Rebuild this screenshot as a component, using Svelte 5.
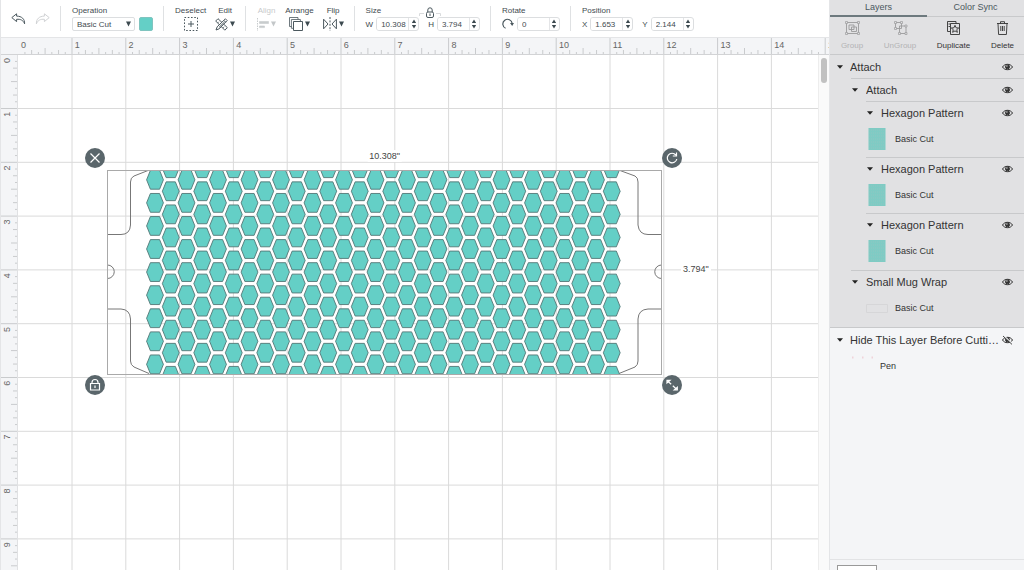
<script lang="ts">
  const unit = 53.8; // screen pixels per inch

  let boardWidth: number = $state(1024);
  let boardHeight: number = $state(570);

  let columns = $derived(Math.ceil(boardWidth / unit));
  let rows = $derived(Math.ceil(boardHeight / unit));

  let operation: string = $state('Basic Cut');
  let width: string = $state('10.308');
  let height: string = $state('3.794');
  let rotation: string = $state('0');
  let posX: string = $state('1.653');
  let posY: string = $state('2.144');
  let activeTab: string = $state('Layers');

  const actions = [
    { name: 'Group', icon: 'group', disabled: true },
    { name: 'UnGroup', icon: 'ungroup', disabled: true },
    { name: 'Duplicate', icon: 'duplicate', disabled: false },
    { name: 'Delete', icon: 'trash', disabled: false }
  ];

  let layers = $state([
    { name: 'Attach', level: 0, visible: true, selected: true },
    { name: 'Attach', level: 1, visible: true, selected: true },
    { name: 'Hexagon Pattern', level: 2, visible: true, selected: true, item: 'Basic Cut', thumb: 'hex' },
    { name: 'Hexagon Pattern', level: 2, visible: true, selected: true, item: 'Basic Cut', thumb: 'hex' },
    { name: 'Hexagon Pattern', level: 2, visible: true, selected: true, item: 'Basic Cut', thumb: 'hex' },
    { name: 'Small Mug Wrap', level: 1, visible: true, selected: true, item: 'Basic Cut', thumb: 'wrap' },
    { name: 'Hide This Layer Before Cutti…', level: 0, visible: false, selected: false, item: 'Pen', thumb: 'pen' }
  ]);

  // Hexagon centres, odd columns are shifted up by half a row
  const hexagons: { x: number; y: number }[] = [];
  for (let col = 0; col < 30; col++) {
    const count = col % 2 ? 10 : 9;
    for (let row = 0; row < count; row++) {
      hexagons.push({ x: 48 + col * 15.75, y: (col % 2 ? -1.8 : 9.8) + row * 23.07 });
    }
  }

  function range(count: number): number[] {
    return Array.from({ length: count }, (_, i) => i);
  }

  function tickLength(i: number): number {
    if (i === 0) return 0;
    if (i % 8 === 0) return 17;
    if (i % 4 === 0) return 7;
    return i % 2 === 0 ? 5 : 3;
  }
</script>

{#snippet arrow()}
  <svg class="arrow" width="5" height="6" viewBox="0 0 5 6"><path d="M0 0.5h5L2.5 5.5z" fill="#3d4a50" /></svg>
{/snippet}

{#snippet stepper()}
  <button class="stepper" aria-label="Step value">
    <svg width="6" height="10" viewBox="0 0 6 10"><path d="M0.8 4L3 0.5 5.2 4zM0.8 6L3 9.5 5.2 6z" fill="#3d4a50" /></svg>
  </button>
{/snippet}

{#snippet eye(open: boolean)}
  <svg width="11" height="10" viewBox="0 0 11 10" fill="none" stroke="#333">
    <path d="M0.5 5C2.5 1.4 8.5 1.4 10.5 5C8.5 8.6 2.5 8.6 0.5 5z" />
    <circle cx="5.5" cy="4.8" r="2" fill="#333" />
    <circle cx="4.9" cy="4" r="0.7" fill="#ddd" stroke="none" />
    {#if !open}
      <path d="M1.8 0.8L10.4 8.8" stroke="#f4f5f7" stroke-width="1.2" />
      <path d="M1 1L10 9.4" stroke-width="0.9" />
    {/if}
  </svg>
{/snippet}

<div class="app">
  <main>
    <header class="toolbar">
      <div class="history">
        <button aria-label="Undo">
          <svg width="15" height="12" viewBox="0 0 15 12" fill="none" stroke="#4b585e"><path d="M5.6 0.8L0.8 4.6L5.6 8.6V6.3C9.5 6 12 7 13.6 10.8C13.8 6 10.8 3.2 5.6 3.1z" stroke-linejoin="round" /></svg>
        </button>
        <button aria-label="Redo">
          <svg width="15" height="12" viewBox="0 0 15 12" fill="none" stroke="#d0d2d4"><path d="M9.4 0.8L14.2 4.6L9.4 8.6V6.3C5.5 6 3 7 1.4 10.8C1.2 6 4.2 3.2 9.4 3.1z" stroke-linejoin="round" /></svg>
        </button>
      </div>

      <div class="group">
        <label class="title" for="operation">Operation</label>
        <div class="row">
          <span class="select">
            <select id="operation" bind:value={operation}>
              <option>Basic Cut</option>
              <option>Pen</option>
            </select>
            {@render arrow()}
          </span>
          <button class="swatch" aria-label="Colour"></button>
        </div>
      </div>

      <div class="group tools">
        <button class="tool">
          <span class="title">Deselect</span>
          <span class="row">
            <svg width="14" height="14" viewBox="0 0 14 14" fill="none" stroke="#4b585e">
              <path d="M0.5 0.5h13v13h-13z" stroke-dasharray="1.6 1.65" /><path d="M7 4v6M4 7h6" />
            </svg>
          </span>
        </button>
        <button class="tool">
          <span class="title">Edit</span>
          <span class="row">
            <svg width="13" height="13" viewBox="0 0 13 13" fill="none" stroke="#4b585e">
              <path d="M3 0.7L12.3 9.6L9.8 12.2L0.7 3z" />
              <path d="M10.4 0.8L12.2 2.6L4.2 10.8L1 12L2.2 8.8z" fill="#fff" />
              <path d="M3.8 3.8l-1 1M5.6 5.4l-1 1M9 8.8l-1 1M9 2.4l1.7 1.8M9.5 4L4 9.4" />
            </svg>
            {@render arrow()}
          </span>
        </button>
      </div>

      <div class="group tools">
        <button class="tool" disabled>
          <span class="title">Align</span>
          <span class="row">
            <svg width="12" height="13" viewBox="0 0 12 13" fill="none" stroke="#4b585e">
              <path d="M0.5 0v13" stroke-dasharray="1.5 1" /><path d="M2.5 3.5h9v2h-9zM2.5 8h5v1.6h-5z" fill="#4b585e" stroke-width="0.6" />
            </svg>
            {@render arrow()}
          </span>
        </button>
        <button class="tool">
          <span class="title">Arrange</span>
          <span class="row">
            <svg width="14" height="14" viewBox="0 0 14 14" fill="none" stroke="#4b585e">
              <path d="M2.5 9.5h-2v-9h8.5v2" stroke-width="0.8" /><path d="M4 11.3h-1.6v-8.8h9v1.8" stroke-width="0.8" /><path d="M4.5 4.5h9v9h-9z" fill="#fff" />
            </svg>
            {@render arrow()}
          </span>
        </button>
        <button class="tool">
          <span class="title">Flip</span>
          <span class="row">
            <svg width="14" height="14" viewBox="0 0 14 14" fill="none" stroke="#4b585e">
              <path d="M0.6 2.2L5 7L0.6 11.8zM13.4 2.2L9 7l4.4 4.8z" /><path d="M7 0v14" stroke-dasharray="2 1.4" />
            </svg>
            {@render arrow()}
          </span>
        </button>
      </div>

      <div class="group">
        <span class="title">Size</span>
        <div class="row fields">
          <label for="width">W</label>
          <span class="field"><input id="width" bind:value={width} />{@render stepper()}</span>
          <label class="next" for="height">H</label>
          <span class="field"><input id="height" bind:value={height} />{@render stepper()}</span>
        </div>
        <button class="ratio" aria-label="Lock proportions">
          <svg width="22" height="12" viewBox="0 0 22 12" fill="none" stroke="#4b585e">
            <path d="M0.5 9V6.5H5M17 6.5h4.5V9" stroke="#d9dbdd" />
            <path d="M8.8 5V3a2.2 2.2 0 0 1 4.4 0v2" /><rect x="7.5" y="5" width="7" height="5.5" rx="1.5" /><path d="M11 6.5v2.5" />
          </svg>
        </button>
      </div>

      <div class="group">
        <label class="title" for="rotate">Rotate</label>
        <div class="row fields">
          <svg width="12" height="12" viewBox="0 0 12 12" fill="none" stroke="#4b585e">
            <path d="M3.6 10.3A4.7 4.7 0 1 1 10.2 5.5" stroke-width="1.2" /><path d="M8 5h4L10.2 8z" fill="#4b585e" stroke="none" />
          </svg>
          <span class="field"><input id="rotate" bind:value={rotation} />{@render stepper()}</span>
        </div>
      </div>

      <div class="group">
        <span class="title">Position</span>
        <div class="row fields">
          <label for="pos-x">X</label>
          <span class="field"><input id="pos-x" bind:value={posX} />{@render stepper()}</span>
          <label class="next" for="pos-y">Y</label>
          <span class="field"><input id="pos-y" bind:value={posY} />{@render stepper()}</span>
        </div>
      </div>
    </header>

    <div class="board" bind:clientWidth={boardWidth} bind:clientHeight={boardHeight}>
      <svg class="ruler top">
        {#each range(columns * 8) as i}
          <line x1={17.2 + (i * unit) / 8} x2={17.2 + (i * unit) / 8} y1={17 - tickLength(i)} y2="17" />
        {/each}
        {#each range(columns) as n}
          <text x={20 + n * unit} y="10">{n}</text>
        {/each}
      </svg>
      <svg class="ruler side">
        {#each range(rows * 8) as i}
          <line y1={(i * unit) / 8 - 0.3} y2={(i * unit) / 8 - 0.3} x1={17 - tickLength(i)} x2="17" />
        {/each}
        {#each range(rows) as n}
          <text transform="translate(9 {8 + n * unit}) rotate(-90)">{n}</text>
        {/each}
      </svg>

      <div class="canvas">
        <svg class="grid">
          {#each range(columns) as n}
            <line x1={(n + 1) * unit + 0.2} x2={(n + 1) * unit + 0.2} y1="0" y2="100%" />
          {/each}
          {#each range(rows) as n}
            <line x1="0" x2="100%" y1={(n + 1) * unit - 0.3} y2={(n + 1) * unit - 0.3} />
          {/each}
        </svg>

        <div class="selection">
          <svg width="555" height="205" viewBox="0 0 555 205">
            <g class="wrap">
              <path d="M41 0.5L27 6Q23.5 7.5 23.5 12V55Q23 64.5 14 64.5H0.5M0.5 95A6.7 6.7 0 0 1 0.5 108.5M0.5 139H14Q23 139.5 23.5 149V191Q23.5 195 27 197L42 203.5" />
              <path d="M513 0.5L528 6Q531 7.5 531 12V55Q532 64.5 541 64.5H554.5M554.5 95A6.7 6.7 0 0 0 554.5 108.5M554.5 139H541Q531.5 139.5 531 149V191Q531 195 528 197L512 203.5" />
            </g>
            <g class="hexes">
              {#each hexagons as h}
                <path d="M{h.x - 8.4} {h.y}l3.8 -9.4h9.2l3.8 9.4l-3.8 9.4h-9.2z" />
              {/each}
            </g>
            <rect class="bounds" x="0.5" y="0.5" width="554" height="204" />
          </svg>
          <span class="size width">10.308"</span>
          <span class="size height">3.794"</span>
          <button class="handle remove" aria-label="Delete selection">
            <svg width="20" height="20" viewBox="0 0 20 20"><path d="M5.5 5.5l9 9M14.5 5.5l-9 9" /></svg>
          </button>
          <button class="handle rotate" aria-label="Rotate selection">
            <svg width="20" height="20" viewBox="0 0 20 20"><path d="M13.8 7A4.8 4.8 0 1 0 14.8 11M14.5 4.5v3.5h-3.7" /></svg>
          </button>
          <button class="handle lock" aria-label="Lock selection">
            <svg width="20" height="20" viewBox="0 0 20 20"><path d="M7 8.5V7.5a3 3 0 0 1 6 0v1M5.5 8.5h9v6.5h-9zM10 10.5v2.5" /></svg>
          </button>
          <button class="handle resize" aria-label="Resize selection">
            <svg width="20" height="20" viewBox="0 0 20 20"><path d="M5.5 6L9.2 9.2M10.8 10.8l4 3.7" /><path d="M5 8V5.4h3zM15.3 12.4V15h-3z" /></svg>
          </button>
        </div>
      </div>
      <div class="scrollbar"><div class="thumb"></div></div>
    </div>
  </main>

  <aside>
    <nav class="tabs">
      {#each ['Layers', 'Color Sync'] as tab}
        <button class:active={activeTab === tab} onclick={() => (activeTab = tab)}>{tab}</button>
      {/each}
    </nav>

    <div class="actions">
      {#each actions as action}
        <button disabled={action.disabled}>
          <svg width="15" height="14" viewBox="0 0 15 14" fill="none" stroke="#333" stroke-width="0.9">
            {#if action.icon === 'group'}
              <path d="M1.5 1.5h12v11h-12z" /><path d="M0.5 0.5h2v2h-2zM12.5 0.5h2v2h-2zM0.5 11.5h2v2h-2zM12.5 11.5h2v2h-2z" fill="#e1e1e3" stroke-width="0.7" /><path d="M4 4h5v4.5H4zM6.5 6h5v4.5h-5z" />
            {:else if action.icon === 'ungroup'}
              <path d="M2.5 1.5h6v6h-6zM6.5 5h6.5v7.5H6.5z" /><path d="M1.5 0.5h2v2h-2zM7.5 0.5h2v2h-2zM1.5 6.5h2v2h-2zM5.5 11.5h2v2h-2zM12 11.5h2v2h-2zM12 4h2v2h-2z" fill="#e1e1e3" stroke-width="0.7" />
            {:else if action.icon === 'duplicate'}
              <path d="M4 10.5H1.5v-10H10v2M2.5 3h2M2.5 5.5h1.5" /><path d="M4.5 2.5h9v11h-9z" /><path d="M9 4.3l1.1 2.5 2.6 0.2-2 1.7 0.7 2.6L9 9.9 6.6 11.3l0.7-2.6-2-1.7 2.6-0.2z" />
            {:else}
              <path d="M2 2.5h11M5.5 2.5V0.7h4v1.8M3 2.5l0.6 11h7.8l0.6-11M5.8 5v5M7.5 5v5M9.2 5v5" />
            {/if}
          </svg>
          {action.name}
        </button>
      {/each}
    </div>

    <ul class="layers">
      {#each layers as layer}
        <li class="level-{layer.level}" class:selected={layer.selected}>
          <div class="inner">
            <div class="head">
              <svg class="caret" width="6" height="4" viewBox="0 0 6 4"><path d="M0 0.3h6L3 3.7z" fill="#222" /></svg>
              <span class="name">{layer.name}</span>
              <button class="eye" aria-label="Toggle visibility" onclick={() => (layer.visible = !layer.visible)}>
                {@render eye(layer.visible)}
              </button>
            </div>
            {#if layer.item}
              <div class="item">
                <svg width="22" height="22" viewBox="0 0 22 22">
                  {#if layer.thumb === 'hex'}
                    <rect x="2.5" width="17" height="22" fill="#7fcbc4" />
                    {#each [2, 5, 8, 11, 14, 17, 20] as y}
                      <path d="M3 {y}h16" stroke="#9ac8c5" stroke-width="0.6" stroke-dasharray="1 1" />
                    {/each}
                  {:else if layer.thumb === 'wrap'}
                    <path d="M0.5 7.5h21v8h-21z" fill="none" stroke="#d6d6d8" />
                  {:else}
                    <path d="M1 2.5h1.5M11 2.5h1.5M20.5 2.5h1.5" stroke="#efd3da" stroke-width="2" />
                  {/if}
                </svg>
                <span>{layer.item}</span>
              </div>
            {/if}
          </div>
        </li>
      {/each}
    </ul>

    <footer><button aria-label="Canvas colour"></button></footer>
  </aside>
</div>

<style>
  :global(body) {
    margin: 0;
    overflow: hidden;
  }

  .app {
    display: flex;
    height: 100vh;
    font-family: "Liberation Sans", Arial, sans-serif;
    font-size: 8px;
    color: #3f4b50;
    background: #fff;
  }

  button {
    margin: 0;
    padding: 0;
    border: 0;
    background: none;
    font: inherit;
    color: inherit;
    cursor: pointer;
  }

  svg {
    display: block;
    flex: none;
  }

  main {
    flex: 1;
    min-width: 0;
    display: flex;
    flex-direction: column;
    border-left: 1px solid #e4e5e7;
    box-sizing: border-box;
  }

  /* Toolbar */
  .toolbar {
    display: flex;
    align-items: center;
    height: 37px;
    border-bottom: 1px solid #e4e5e7;
  }

  .history {
    display: flex;
    gap: 9px;
    padding: 0 10px;
  }

  .group {
    position: relative;
    height: 25px;
    padding: 0 10px 0 11px;
    border-left: 1px solid #dfe1e3;
  }

  .title {
    display: block;
    height: 11px;
    line-height: 9px;
  }

  .row {
    display: flex;
    align-items: center;
    height: 14px;
    gap: 4px;
  }

  .tools {
    display: flex;
    gap: 9px;
  }

  .tool {
    display: flex;
    flex-direction: column;
    align-items: center;
  }

  .tool .row {
    gap: 2px;
  }

  .tool:disabled {
    opacity: 0.3;
  }

  .select {
    position: relative;
    display: flex;
  }

  .select .arrow {
    position: absolute;
    right: 4px;
    top: 4px;
    pointer-events: none;
  }

  select {
    appearance: none;
    width: 63px;
    height: 14px;
    padding: 0 4px;
    border: 1px solid #dcdee0;
    border-radius: 2px;
    background: #fff;
    font: inherit;
    color: inherit;
  }

  .swatch {
    width: 14px;
    height: 14px;
    border: 1px solid #7fc4bf;
    border-radius: 2px;
    background: #64cfc6;
  }

  .fields {
    gap: 3px;
  }

  .next {
    margin-left: 6px;
  }

  .field {
    display: flex;
    box-sizing: border-box;
    width: 43px;
    height: 14px;
    border: 1px solid #dcdee0;
    border-radius: 3px;
    overflow: hidden;
  }

  .field input {
    flex: 1;
    min-width: 0;
    padding: 0 0 0 4px;
    border: 0;
    outline: 0;
    background: #fff;
    font: inherit;
    color: inherit;
  }

  .stepper {
    display: grid;
    place-items: center;
    width: 10px;
    border-left: 1px solid #e4e5e7;
  }

  .ratio {
    position: absolute;
    left: 64px;
    top: 1px;
  }

  /* Rulers and canvas */
  .board {
    flex: 1;
    min-height: 0;
    display: grid;
    grid-template-columns: 17px 1fr 11px;
    grid-template-rows: 17px 1fr;
  }

  .ruler {
    width: 100%;
    height: 100%;
    min-width: 0;
    min-height: 0;
    background: #f4f5f7;
  }

  .ruler line {
    stroke: #c9cbcd;
  }

  .ruler text {
    font-size: 9px;
    fill: #666;
  }

  .top {
    grid-column: 1 / -1;
    border-bottom: 1px solid #d2d3d5;
    box-sizing: border-box;
  }

  .side {
    border-right: 1px solid #e0e1e3;
    box-sizing: border-box;
  }

  .canvas {
    position: relative;
    overflow: hidden;
    min-width: 0;
  }

  .grid {
    width: 100%;
    height: 100%;
  }

  .grid line {
    stroke: #dadada;
  }

  .selection {
    position: absolute;
    left: 89px;
    top: 115px;
  }

  .wrap path {
    fill: none;
    stroke: #777;
  }

  .hexes path {
    fill: #64cfc6;
    stroke: #547776;
    stroke-width: 0.9;
  }

  .bounds {
    fill: none;
    stroke: #a9a9a9;
  }

  .size {
    position: absolute;
    padding: 0 2px;
    background: #fff;
    font-size: 9px;
    line-height: 12px;
    color: #444;
  }

  .size.width {
    left: 50%;
    top: -20px;
    transform: translateX(-50%);
  }

  .size.height {
    left: 574px;
    top: 93px;
  }

  .handle {
    position: absolute;
    width: 20px;
    height: 20px;
    border-radius: 50%;
    background: #5a666b;
  }

  .handle path {
    fill: none;
    stroke: #fff;
    stroke-width: 1.2;
  }

  .remove {
    left: -22px;
    top: -22px;
  }

  .rotate {
    right: -20px;
    top: -22px;
  }

  .lock {
    left: -22px;
    bottom: -20px;
  }

  .resize {
    right: -20px;
    bottom: -20px;
  }

  .scrollbar {
    padding: 3px 2px;
    background: #fafafa;
    border-left: 1px solid #ededed;
  }

  .thumb {
    width: 6px;
    height: 25px;
    border-radius: 3px;
    background: #c1c1c1;
  }

  /* Layers panel */
  aside {
    display: flex;
    flex-direction: column;
    width: 195px;
    background: #f4f5f7;
    box-sizing: border-box;
    border-left: 1px solid #e4e5e7;
    color: #333;
  }

  .tabs {
    display: grid;
    grid-template-columns: 1fr 1fr;
    background: #e1e1e3;
    font-size: 9px;
  }

  .tabs button {
    height: 17px;
    padding-bottom: 2px;
    border-bottom: 1px solid #c8c9cb;
    color: #4b585e;
  }

  .tabs .active {
    border-bottom: 2px solid #6d797e;
    padding-bottom: 1px;
  }

  .actions {
    display: grid;
    grid-template-columns: 44px 52px 55px 43px;
    height: 37px;
    border-bottom: 1px solid #c8c9cb;
    background: #e1e1e3;
  }

  .actions button {
    display: flex;
    flex-direction: column;
    align-items: center;
    gap: 6px;
    padding-top: 4px;
  }

  .actions button:disabled {
    color: #b3b3b5;
  }

  .actions button:disabled svg {
    opacity: 0.4;
  }

  .layers {
    flex: 1;
    min-height: 0;
    margin: 0;
    padding: 0;
    list-style: none;
  }

  .selected {
    background: #e1e1e3;
  }

  .inner {
    border-top: 1px solid #c8c9cb;
  }

  .level-0:first-child .inner {
    border-top: 0;
  }

  .level-1 .inner {
    margin-left: 21px;
  }

  .level-2 .inner {
    margin-left: 36px;
  }

  .level-2 + .level-1 {
    padding-top: 1px;
  }

  .head {
    display: flex;
    align-items: center;
    height: 22px;
    padding: 0 11px 0 1px;
    font-size: 11px;
  }

  .level-0 .head {
    height: 23px;
    padding-left: 7px;
  }

  .caret {
    margin-right: 8px;
  }

  .level-0 .caret {
    margin-right: 7px;
  }

  .name {
    flex: 1;
    min-width: 0;
    overflow: hidden;
    white-space: nowrap;
    text-overflow: ellipsis;
  }

  .item {
    display: flex;
    align-items: center;
    gap: 7px;
    height: 30px;
    padding-bottom: 3px;
    font-size: 9px;
  }

  .level-0 .item {
    padding-left: 21px;
  }

  .level-1 .item {
    padding-left: 15px;
    padding-bottom: 4px;
  }

  footer {
    height: 10px;
    overflow: hidden;
    border-top: 1px solid #e2e3e5;
  }

  footer button {
    width: 40px;
    height: 20px;
    margin: 5px 0 0 7px;
    border: 1px solid #999;
    background: #fff;
  }
</style>
